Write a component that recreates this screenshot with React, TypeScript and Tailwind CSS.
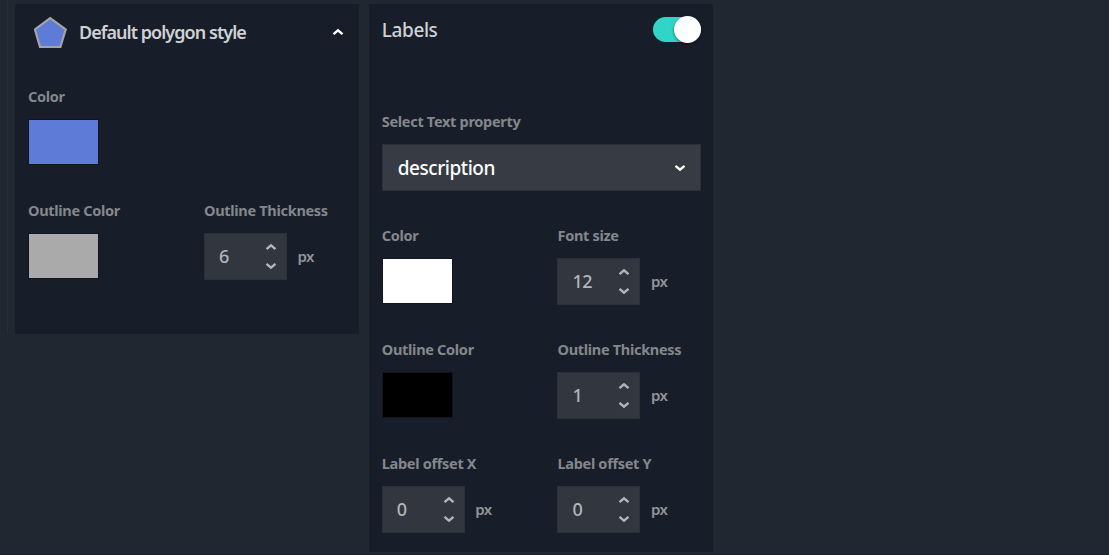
import React from "react";

function Chevron({ up = false, className = "" }: { up?: boolean; className?: string }) {
  return (
    <svg viewBox="0 0 12 8" width="12" height="8" className={className} fill="none" stroke="currentColor" strokeWidth="2.4">
      <path d={up ? "M1.5 6.2 L6 2.4 L10.5 6.2" : "M1.5 1.8 L6 5.6 L10.5 1.8"} />
    </svg>
  );
}

function Field({ label, children }: { label: string; children: React.ReactNode }) {
  return (
    <div className="flex h-[79px] flex-col">
      <div className="-mt-px h-5 text-[14.5px] leading-5 font-bold tracking-[-0.3px] whitespace-nowrap text-[#84878c]">{label}</div>
      <div className="mt-[13px]">{children}</div>
    </div>
  );
}

function Swatch({ color }: { color: string }) {
  return <div className={`h-[46px] w-[71px] border border-[#10151f] ${color}`} />;
}

function NumberInput({ value }: { value: string }) {
  return (
    <div className="flex items-center">
      <div className="flex h-[47px] w-[83px] items-center justify-between border border-[#2b303a] bg-[#32363f] pr-[9px] pl-[14px] text-[#b3b5b8]">
        <span className="-mt-0.5 text-[18px] leading-6 font-medium tracking-[-0.6px]">{value}</span>
        <span className="flex flex-col gap-[11px]">
          <Chevron up />
          <Chevron />
        </span>
      </div>
      <span className="-mt-0.5 ml-[10.5px] text-[15px] leading-5 font-semibold tracking-[-0.6px] text-[#92959a]">px</span>
    </div>
  );
}

export default function App() {
  return (
    <div className="flex h-[555px] w-full items-start overflow-hidden border-b border-[#171d29] bg-[#202730] pt-1 font-['Noto_Sans',sans-serif]">
      <div className="-mt-1 h-[334px] w-2 shrink-0 border-r border-[#272e37]" />
      <section className="ml-[7.4px] h-[330px] w-[344px] shrink-0 bg-[#181e29] pl-[12.6px]">
        <header className="flex h-[56px] items-center pr-[15px] pl-1.5">
          <svg width="34" height="34" viewBox="0 0 34 34" className="mt-0.5">
            <path d="M16.2 2.1 L31.7 13.4 L26.4 31 H6 L0.9 13.4 Z" fill="#5e7bd8" stroke="#a4a5a8" strokeWidth="2.2" />
          </svg>
          <h2 className="ml-[11px] text-[18px] leading-6 font-semibold tracking-[-0.96px] whitespace-nowrap text-[#cfd1d3]">Default polygon style</h2>
          <Chevron up className="ml-auto text-white" />
        </header>
        <div className="mt-[27px] grid grid-cols-[176px_1fr] gap-y-[35px]">
          <div className="col-span-2">
            <Field label="Color"><Swatch color="bg-[#5e7bd8]" /></Field>
          </div>
          <Field label="Outline Color"><Swatch color="bg-[#aaaaaa]" /></Field>
          <Field label="Outline Thickness"><NumberInput value="6" /></Field>
        </div>
      </section>
      <section className="ml-[9.6px] h-[548px] w-[344px] shrink-0 bg-[#181e29] pr-3 pl-[12.8px]">
        <header className="flex h-[51px] items-center justify-between">
          <h2 className="text-[19px] leading-6 font-medium tracking-[-0.4px] text-[#cfd1d3]">Labels</h2>
          <div className="flex h-[25px] w-[48px] items-center justify-end rounded-full bg-[#30d5c8]">
            <div className="size-[27px] shrink-0 rounded-full bg-white shadow-[0_1px_3px_#0008]" />
          </div>
        </header>
        <div className="mt-[57px] grid grid-cols-[175.7px_1fr] gap-y-[35px]">
          <div className="col-span-2">
            <Field label="Select Text property">
              <div className="flex h-[47px] items-center justify-between border border-[#2a2f39] bg-[#373b43] pr-[14px] pl-[15px] text-white">
                <span className="text-[19px] leading-6 font-medium tracking-[-0.45px]">description</span>
                <Chevron className="mt-px" />
              </div>
            </Field>
          </div>
          <Field label="Color"><Swatch color="bg-white" /></Field>
          <Field label="Font size"><NumberInput value="12" /></Field>
          <Field label="Outline Color"><Swatch color="bg-black" /></Field>
          <Field label="Outline Thickness"><NumberInput value="1" /></Field>
          <Field label="Label offset X"><NumberInput value="0" /></Field>
          <Field label="Label offset Y"><NumberInput value="0" /></Field>
        </div>
      </section>
    </div>
  );
}
